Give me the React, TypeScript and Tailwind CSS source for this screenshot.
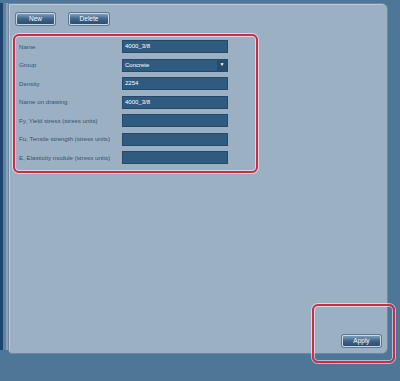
const fields = [
    { label: "Name", value: "4000_3/8" },
    { label: "Group", value: "Concrete", select: true },
    { label: "Density", value: "2254" },
    { label: "Name on drawing", value: "4000_3/8" },
    { label: "Fy, Yield stress (stress units)", value: "" },
    { label: "Fu, Tensile strength (stress units)", value: "" },
    { label: "E, Elasticity module (stress units)", value: "" },
];

function ToolButton({ label, className = "" }: { label: string; className?: string }) {
    return (
        <button
            className={`flex h-[12px] items-center justify-center rounded-[2px] border border-[#c9d6e2] bg-gradient-to-b from-[#7f9dba] via-[#3f6488] to-[#2a4f73] text-[6.5px] text-white shadow-[0_0_0_1px_#5a7a98] ${className}`}
        >
            {label}
        </button>
    );
}

export default function App() {
    return (
        <div
            className="relative flex h-[381px] w-[400px] bg-[#4e7697] pt-[3px]"
            style={{ fontFamily: '"Liberation Sans", Arial, sans-serif' }}
        >
            {/* left edge strip */}
            <div className="flex h-[347px] shrink-0">
                <div className="w-[3px] bg-[#1d456d]" />
                <div className="w-[3px] bg-[#5f82a5]" />
                <div className="w-[2px] bg-[#8aa1b8]" />
            </div>

            {/* main panel */}
            <div className="flex h-[351px] w-[380px] flex-col rounded-r-[6px] rounded-bl-[4px] border border-[#6e88a1] bg-[#9cb0c3] shadow-[inset_1px_1px_0_#b8c8d6]">
                <div className="ml-[7px] mt-[9px] flex gap-[14px]">
                    <ToolButton label="New" className="w-[39px]" />
                    <ToolButton label="Delete" className="w-[40px]" />
                </div>

                {/* form (highlighted) */}
                <div className="ml-[4px] mt-[9px] flex h-[139px] w-[245px] flex-col gap-[5.5px] rounded-[6px] border-2 border-[#d0294a] px-[4px] pt-[4px] shadow-[0_0_0_1px_rgba(255,255,255,0.55),inset_0_0_0_1px_rgba(255,255,255,0.55)]">
                    {fields.map((f) => (
                        <div key={f.label} className="flex h-[13px] items-center">
                            <span className="w-[103px] whitespace-nowrap text-[6.2px] text-[#33526f]">{f.label}</span>
                            <div className="flex h-[13px] w-[106px] items-center border border-[#26496a] bg-[#2f5b81]">
                                <span className="flex-1 pl-[2px] text-[6px] text-white">{f.value}</span>
                                {f.select && (
                                    <span className="flex h-full w-[10px] items-center justify-center bg-[#264c70] text-[5px] text-white">
                                        ▼
                                    </span>
                                )}
                            </div>
                        </div>
                    ))}
                </div>

                <div className="mb-[6px] mr-[6px] mt-auto flex justify-end">
                    <ToolButton label="Apply" className="w-[39px]" />
                </div>
            </div>

            {/* highlight around Apply */}
            <div className="absolute left-[312px] top-[304px] h-[59px] w-[83px] rounded-[6px] border-2 border-[#d0294a] shadow-[0_0_0_1px_rgba(255,255,255,0.55),inset_0_0_0_1px_rgba(255,255,255,0.55)]" />
        </div>
    );
}
